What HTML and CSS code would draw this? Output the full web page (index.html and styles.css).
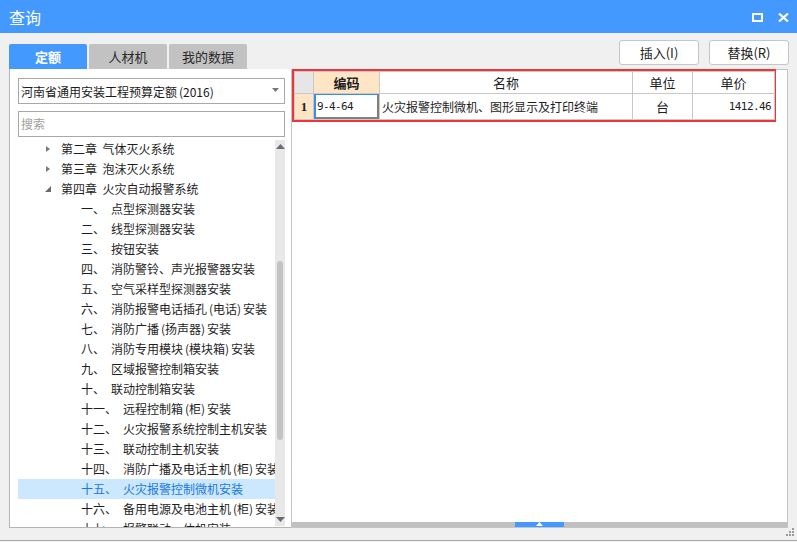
FILE: index.html
```html
<!DOCTYPE html>
<html lang="zh">
<head>
<meta charset="utf-8">
<title>查询</title>
<link rel="stylesheet" href="styles.css">
</head>
<body>
<div class="window">
  <header class="titlebar">
    <span class="title">查询</span>
    <div class="win-ctrls">
      <svg class="ico" width="11" height="9" viewBox="0 0 11 9"><rect x="1" y="1" width="9" height="7" fill="none" stroke="#fff" stroke-width="2"/></svg>
      <svg class="ico" width="11" height="9" viewBox="0 0 11 9"><path d="M1 0.5 L10 8.5 M10 0.5 L1 8.5" stroke="#fff" stroke-width="2.2" fill="none"/></svg>
    </div>
  </header>

  <div class="toolbar">
    <nav class="tabs">
      <div class="tab active">定额</div>
      <div class="tab">人材机</div>
      <div class="tab">我的数据</div>
    </nav>
    <div class="actions">
      <button class="btn">插入(I)</button>
      <button class="btn">替换(R)</button>
    </div>
  </div>

  <div class="panels">
    <aside class="left">
      <div class="select">
        <span>河南省通用安装工程预算定额<span class="pl">(</span>2016<span class="pr">)</span></span>
        <svg width="7" height="4" viewBox="0 0 7 4"><path d="M0 0 H7 L3.5 4 Z" fill="#777"/></svg>
      </div>
      <div class="search">搜索</div>
      <div class="tree-wrap">
        <ul class="tree">
          <li class="chap"><span class="tri closed"></span>第二章&nbsp;&nbsp;气体灭火系统</li>
          <li class="chap"><span class="tri closed"></span>第三章&nbsp;&nbsp;泡沫灭火系统</li>
          <li class="chap"><span class="tri open"></span>第四章&nbsp;&nbsp;火灾自动报警系统</li>
          <li class="sec"><span class="num">一、</span>点型探测器安装</li>
          <li class="sec"><span class="num">二、</span>线型探测器安装</li>
          <li class="sec"><span class="num">三、</span>按钮安装</li>
          <li class="sec"><span class="num">四、</span>消防警铃、声光报警器安装</li>
          <li class="sec"><span class="num">五、</span>空气采样型探测器安装</li>
          <li class="sec"><span class="num">六、</span>消防报警电话插孔<span class="pl">(</span>电话<span class="pr">)</span>安装</li>
          <li class="sec"><span class="num">七、</span>消防广播<span class="pl">(</span>扬声器<span class="pr">)</span>安装</li>
          <li class="sec"><span class="num">八、</span>消防专用模块<span class="pl">(</span>模块箱<span class="pr">)</span>安装</li>
          <li class="sec"><span class="num">九、</span>区域报警控制箱安装</li>
          <li class="sec"><span class="num">十、</span>联动控制箱安装</li>
          <li class="sec"><span class="num">十一、</span>远程控制箱<span class="pl">(</span>柜<span class="pr">)</span>安装</li>
          <li class="sec"><span class="num">十二、</span>火灾报警系统控制主机安装</li>
          <li class="sec"><span class="num">十三、</span>联动控制主机安装</li>
          <li class="sec"><span class="num">十四、</span>消防广播及电话主机<span class="pl">(</span>柜<span class="pr">)</span>安装</li>
          <li class="sec selected"><span class="num">十五、</span>火灾报警控制微机安装</li>
          <li class="sec"><span class="num">十六、</span>备用电源及电池主机<span class="pl">(</span>柜<span class="pr">)</span>安装</li>
          <li class="sec"><span class="num">十七、</span>报警联动一体机安装</li>
        </ul>
        <div class="vscroll">
          <svg class="arrow" width="9" height="5" viewBox="0 0 9 5"><path d="M0 5 L4.5 0 L9 5 Z" fill="#6b6b78"/></svg>
          <div class="vtrack"><div class="vthumb"></div></div>
          <svg class="arrow" width="9" height="5" viewBox="0 0 9 5"><path d="M0 0 L4.5 5 L9 0 Z" fill="#6b6b78"/></svg>
        </div>
      </div>
    </aside>

    <section class="right">
      <div class="grid-area">
        <div class="mark">
          <table class="grid">
            <colgroup>
              <col class="c-no"><col class="c-code"><col class="c-name"><col class="c-unit"><col class="c-price">
            </colgroup>
            <thead>
              <tr>
                <th class="h-no"></th>
                <th class="h-code">编码</th>
                <th>名称</th>
                <th>单位</th>
                <th>单价</th>
              </tr>
            </thead>
            <tbody>
              <tr>
                <td class="d-no">1</td>
                <td class="d-code">9-4-64</td>
                <td class="d-name">火灾报警控制微机、图形显示及打印终端</td>
                <td class="d-unit">台</td>
                <td class="d-price">1412.46</td>
              </tr>
            </tbody>
          </table>
        </div>
      </div>
      <div class="hscroll">
        <div class="hthumb"><svg width="7" height="4" viewBox="0 0 7 4"><path d="M0 4 L3.5 0 L7 4 Z" fill="#fff"/></svg></div>
      </div>
    </section>
  </div>

  <footer class="statusbar">
    <svg class="grip" width="9" height="9" viewBox="0 0 9 9">
      <rect x="6" y="0" width="2" height="2" fill="#9a9a9a"/>
      <rect x="3" y="3" width="2" height="2" fill="#9a9a9a"/>
      <rect x="6" y="3" width="2" height="2" fill="#9a9a9a"/>
      <rect x="0" y="6" width="2" height="2" fill="#9a9a9a"/>
      <rect x="3" y="6" width="2" height="2" fill="#9a9a9a"/>
      <rect x="6" y="6" width="2" height="2" fill="#9a9a9a"/>
    </svg>
  </footer>
</div>
</body>
</html>
```

FILE: styles.css
```css
* { box-sizing: border-box; }
html, body {
  margin: 0;
  padding: 0;
  background: #f0f0f0;
}
body {
  font-family: "Noto Sans CJK SC", "Noto Sans", sans-serif;
  font-size: 12px;
  color: #1e1e1e;
}
.window {
  width: 797px;
  height: 542px;
  display: flex;
  flex-direction: column;
  background: #f0f0f0;
  overflow: hidden;
}

/* title bar */
.titlebar {
  height: 33px;
  flex: none;
  background: #4499ff;
  display: flex;
  align-items: center;
  justify-content: space-between;
  padding: 0 8px 0 9px;
}
.title {
  color: #fff;
  font-size: 16px;
  line-height: 20px;
}
.win-ctrls {
  display: flex;
  align-items: center;
  gap: 15px;
  padding-top: 1px;
}
.ico { display: block; }

/* toolbar */
.toolbar {
  height: 36px;
  flex: none;
  display: flex;
  justify-content: space-between;
  padding: 0 8px 0 9px;
}
.tabs {
  display: flex;
  align-self: flex-end;
  gap: 2px;
}
.tab {
  width: 78px;
  height: 25px;
  background: #c2c2c2;
  border-radius: 2px 2px 0 0;
  font-size: 13px;
  line-height: 25px;
  text-align: center;
  color: #2a2a2a;
}
.tab.active {
  background: #4499ff;
  color: #fff;
  font-weight: bold;
}
.actions {
  display: flex;
  gap: 10px;
  margin-top: 7px;
}
.btn {
  width: 80px;
  height: 25px;
  background: #fff;
  border: 1px solid #c6c6c6;
  border-radius: 3px;
  font-family: "Noto Sans CJK SC", "Noto Sans", sans-serif;
  font-size: 13px;
  color: #222;
  padding: 0;
  line-height: 22px;
}

/* half-width parentheses in a 6px cell, as in the reference font */
.pl, .pr {
  display: inline-block;
  width: 6px;
}
.pl { text-align: right; }
.pr { text-align: left; }

/* panels */
.panels {
  height: 459px;
  flex: none;
  display: flex;
  padding: 0 9px;
}
.left {
  width: 282px;
  flex: none;
  background: #fff;
  border-left: 1px solid #b4b4b4;
  border-bottom: 1px solid #b4b4b4;
  padding: 9px 6px 0 8px;
  display: flex;
  flex-direction: column;
}
.select {
  height: 26px;
  border: 1px solid #a8a8a8;
  display: flex;
  align-items: center;
  justify-content: space-between;
  padding: 0 5px 0 2px;
  font-size: 12px;
  color: #1a1a1a;
}
.select svg { margin-top: -2px; }
.search {
  height: 26px;
  margin-top: 7px;
  border: 1px solid #a8a8a8;
  padding: 0 2px;
  line-height: 24px;
  color: #a0a0a0;
  font-size: 12px;
}
.tree-wrap {
  flex: 1;
  margin-top: 2px;
  display: flex;
  min-height: 0;
}
.tree {
  flex: 1;
  min-width: 0;
  list-style: none;
  margin: 0;
  padding: 0;
  overflow: hidden;
}
.tree li {
  display: block;
  height: 20px;
  line-height: 20px;
  white-space: nowrap;
  overflow: hidden;
}
.chap { padding-left: 27px; }
.tri {
  display: inline-block;
  vertical-align: top;
  width: 16px;
  height: 20px;
  position: relative;
}
.tri.closed::before {
  content: "";
  position: absolute;
  left: 1px;
  top: 7px;
  border-left: 4px solid #7a7a7a;
  border-top: 3.5px solid transparent;
  border-bottom: 3.5px solid transparent;
}
.tri.open::before {
  content: "";
  position: absolute;
  left: 0;
  top: 7px;
  border-right: 6px solid #6a6a6a;
  border-top: 6px solid transparent;
}
.sec { padding-left: 63px; }
.num {
  display: inline-block;
  margin-right: 6px;
}
.sec.selected {
  background: #cce8ff;
  color: #1a78e0;
}
.vscroll {
  width: 10px;
  flex: none;
  background: #e8e8e8;
  margin: 1px 0 1px;
  display: flex;
  flex-direction: column;
  align-items: center;
  padding: 4px 0;
}
.arrow { display: block; flex: none; }
.vtrack {
  flex: 1;
  width: 100%;
  padding: 112px 2px 0 2px;
}
.vthumb {
  height: 179px;
  background: #c4c4c4;
  border-radius: 3px;
}

.right {
  width: 497px;
  flex: none;
  background: #fff;
  border: 1px solid #c4c4c4;
  display: flex;
  flex-direction: column;
}
.grid-area {
  flex: 1;
}
.mark {
  width: 484px;
  border: 2px solid #f0343c;
  margin-top: -1px;
}
.grid {
  width: 480px;
  border-collapse: collapse;
  table-layout: fixed;
  font-size: 12px;
}
.c-no { width: 19px; }
.c-code { width: 66px; }
.c-name { width: 253px; }
.c-unit { width: 60px; }
.c-price { width: 82px; }
.grid th, .grid td {
  border: 1px solid #c8c8c8;
  padding: 0 3px;
  white-space: nowrap;
  overflow: hidden;
}
.grid th {
  height: 22px;
  font-weight: normal;
  text-align: center;
  color: #1e1e1e;
  font-size: 13px;
}
.grid th.h-no { background: #e6e6e6; }
.grid th.h-code {
  background: #fde5c6;
  font-weight: bold;
}
.grid td { height: 26px; }
.d-no {
  background: #fde5c6;
  font-weight: bold;
  text-align: center;
  font-family: "Liberation Serif", serif;
  font-size: 13px;
}
.d-code {
  font-family: "DejaVu Sans Mono", monospace;
  font-size: 11px;
  letter-spacing: -0.6px;
  box-shadow: inset 2px 1px 0 #3c8cf0, inset -2px -2px 0 #808080;
}
.d-name { padding-left: 2px !important; }
.d-unit { text-align: center; font-size: 13px; }
.d-price {
  text-align: right;
  font-family: "DejaVu Sans Mono", monospace;
  font-size: 11px;
  letter-spacing: -0.6px;
}
.hscroll {
  height: 5px;
  flex: none;
  background: #c0c0c0;
  display: flex;
  padding-left: 223px;
}
.hthumb {
  width: 49px;
  background: #4499ff;
  display: flex;
  justify-content: center;
  align-items: flex-start;
}
.hthumb svg { display: block; }

.statusbar {
  height: 13px;
  flex: none;
  border-bottom: 1px solid #a8a8a8;
  display: flex;
  justify-content: flex-end;
  align-items: flex-start;
  padding-right: 2px;
}
.grip { display: block; }
```
